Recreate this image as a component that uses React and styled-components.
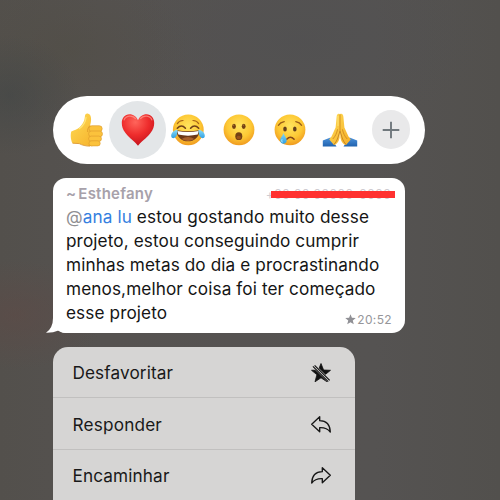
import React from "react";
import styled, { createGlobalStyle } from "styled-components";

const GlobalStyle = createGlobalStyle`
  * { box-sizing: border-box; }
  html, body { margin: 0; padding: 0; }
  body { overflow: hidden; font-family: Inter, "Liberation Sans", sans-serif; }
`;

const Screen = styled.main`
  width: 500px;
  height: 500px;
  padding: 96px 0 0 53px;
  overflow: hidden;
  display: flex;
  flex-direction: column;
  align-items: flex-start;
  background:
    radial-gradient(ellipse 90px 55px at 15px 315px, rgba(96, 73, 69, 0.5), transparent),
    radial-gradient(ellipse 70px 60px at 10px 95px, rgba(66, 70, 70, 0.6), transparent),
    radial-gradient(ellipse 120px 80px at 70px 50px, rgba(80, 76, 66, 0.45), transparent),
    radial-gradient(ellipse 190px 90px at 300px 40px, rgba(80, 80, 82, 0.6), transparent),
    linear-gradient(90deg, #53504c 0%, #555250 20%, #555352 75%, #52504d 100%);
`;

const ReactionBar = styled.div`
  flex: none;
  width: 372px;
  height: 67.5px;
  padding-left: 8.6px;
  border-radius: 34px;
  background: #fff;
  display: grid;
  grid-template-columns: repeat(7, 50.7px);
  align-items: center;
  justify-items: center;
`;

const Reaction = styled.div`
  width: ${(p) => p.$size}px;
  height: ${(p) => p.$size}px;
  margin: 0 -4px;
  border-radius: 50%;
  background: ${(p) => p.$fill || "transparent"};
  display: flex;
  align-items: center;
  justify-content: center;
`;

const Glyph = styled.svg`
  display: block;
  flex: none;
  width: ${(p) => p.$w || 36}px;
  height: ${(p) => p.$w || 36}px;
  overflow: visible;
`;

const Bubble = styled.article`
  position: relative;
  flex: none;
  width: 352px;
  height: 154.5px;
  margin-top: 14.5px;
  padding: 6px 10px 0 13px;
  border-radius: 13px;
  background: #fff;
`;

const Tail = styled.svg`
  position: absolute;
  left: -8px;
  bottom: 0;
  width: 24px;
  height: 20px;
`;

const Header = styled.header`
  height: 20px;
  display: flex;
  align-items: center;
  justify-content: space-between;
`;

const Author = styled.span`
  color: #a7a1aa;
  font-size: 15px;
  font-weight: 600;
  line-height: 20px;
  letter-spacing: 0.22px;
  white-space: pre;
`;

const Tilde = styled.span`
  margin-right: 2px;
`;

const Redacted = styled.span`
  position: relative;
  width: 124px;
  height: 20px;
  padding-right: 4px;
  color: #cfccd1;
  font-size: 12.5px;
  line-height: 22px;
  letter-spacing: 0.1px;
  direction: ltr;
  display: flex;
  justify-content: flex-end;
  white-space: nowrap;

  &::after {
    content: "";
    position: absolute;
    left: 0;
    top: 7px;
    width: 124px;
    height: 7px;
    background: #ff3130;
  }
`;

const Message = styled.div`
  position: relative;
  margin-top: 1px;
  color: #151515;
`;

const Line = styled.div`
  height: 24.1px;
  font-size: 17.2px;
  line-height: 24.1px;
  letter-spacing: ${(p) => p.$track ?? 0.1}px;
  white-space: nowrap;
`;

const At = styled.span`
  color: #8f8f93;
`;

const Mention = styled.span`
  color: #3480e0;
`;

const Stamp = styled.footer`
  position: absolute;
  right: 13px;
  bottom: 5px;
  display: flex;
  align-items: center;
  gap: 1px;
  color: #96969a;
  font-size: 12px;
  line-height: 16px;
  letter-spacing: 0.35px;
`;

const Menu = styled.nav`
  flex: none;
  width: 302px;
  height: 170px;
  margin-top: 14.5px;
  border-radius: 15px 15px 0 0;
  overflow: hidden;
  background: #d6d5d4;
`;

const MenuItem = styled.div`
  height: 51.4px;
  padding: 1px 24px 0 19.5px;
  border-bottom: 1px solid #c1c0bf;
  display: flex;
  align-items: center;
  justify-content: space-between;
  color: #191919;
  font-size: 17.2px;
  letter-spacing: ${(p) => p.$track ?? 0.1}px;
`;

const STAR = "M10 .5 12.6 7 19.5 7.3 14.1 11.7 16 18.8 10 14.8 4 18.8 5.9 11.7 .5 7.3 7.4 7Z";

const EmojiPaints = () => (
  <defs>
    <radialGradient id="face" cx="50%" cy="38%" r="65%">
      <stop offset="0" stopColor="#ffe45e" />
      <stop offset="0.6" stopColor="#fdc834" />
      <stop offset="1" stopColor="#ee951d" />
    </radialGradient>
    <linearGradient id="skin" x1="0" y1="0" x2="1" y2="1">
      <stop offset="0" stopColor="#ffdc55" />
      <stop offset="1" stopColor="#f5ae28" />
    </linearGradient>
    <radialGradient id="heart" cx="42%" cy="25%" r="75%">
      <stop offset="0" stopColor="#ff655b" />
      <stop offset="0.55" stopColor="#ee2c2c" />
      <stop offset="1" stopColor="#c5141d" />
    </radialGradient>
    <linearGradient id="tear" x1="0" y1="0" x2="0" y2="1">
      <stop offset="0" stopColor="#8bdcf8" />
      <stop offset="1" stopColor="#2fa0e4" />
    </linearGradient>
    <linearGradient id="sleeve" x1="0" y1="0" x2="0" y2="1">
      <stop offset="0" stopColor="#4c92dc" />
      <stop offset="1" stopColor="#2163af" />
    </linearGradient>
  </defs>
);

const ThumbsUp = () => (
  <Glyph viewBox="0 0 36 36">
    <EmojiPaints />
    <path d="M2.3 19.5C5.5 17.7 8 17.7 10.4 15.5C13.4 12.4 15.6 9.5 15.8 5.2C15.9 1.8 17.6 1.2 19.2 1.7C22.8 2.8 22.6 8.6 21 13.7L27.5 14.3C29.6 14.5 29.8 16 29.3 18L28 31.5C27 34 24 34.4 20 34.1C15 33.8 12.3 32.4 10.2 31.6L3.5 31.2C1.5 28 1.4 22 2.3 19.5Z" fill="url(#skin)" />
    <g fill="#fbc23c" stroke="#dc982c" strokeWidth="0.6">
      <rect x="20" y="13.7" width="13.2" height="6" rx="3" />
      <rect x="19.6" y="19" width="13.9" height="5.8" rx="2.9" />
      <rect x="19.6" y="24.1" width="12.9" height="5.3" rx="2.65" />
      <rect x="20" y="28.8" width="11.2" height="5.1" rx="2.5" />
    </g>
    <path d="M10.5 16.5C14 14 16.5 10 17 5.5" fill="none" stroke="#ffe577" strokeWidth="1.3" strokeLinecap="round" />
    <path d="M21 13.5C19 15.5 18.2 18 18.8 20" fill="none" stroke="#dc9426" strokeWidth="0.8" />
    <path d="M3.6 31.2 10.2 31.6C13 33.2 17 34.2 21 34.1" fill="none" stroke="#d88e22" strokeWidth="0.8" />
  </Glyph>
);

const Heart = () => (
  <Glyph viewBox="0 0 36 36">
    <path d="M18 33.7C15.6 30 9.5 26.2 5.5 20.9C2.8 17.4 1.8 14.2 1.8 10.9C1.8 5.9 5 2.3 9.4 2.3C13.4 2.3 16.6 4.7 18 8.3C19.4 4.7 22.6 2.3 26.6 2.3C31 2.3 34.2 5.9 34.2 10.9C34.2 14.2 33.2 17.4 30.5 20.9C26.5 26.2 20.4 30 18 33.7Z" fill="url(#heart)" />
    <path d="M4 8.3C5.3 3.5 12.5 2.4 15.8 7M20.2 7C23.5 2.4 30.7 3.5 32 8.3" fill="none" stroke="#ff9a8f" strokeWidth="1.2" opacity="0.7" />
  </Glyph>
);

const Tears = () => (
  <Glyph viewBox="0 0 36 36">
    <circle cx="18.3" cy="17.8" r="15.4" fill="url(#face)" />
    <path d="M7.3 11.7Q9 8.7 13 8.5M28.7 11.7Q27 8.7 23 8.5" fill="none" stroke="#a56318" strokeWidth="1.2" strokeLinecap="round" />
    <path d="M7.3 16.2Q11.5 11.8 15.4 16.2M28.7 16.2Q24.5 11.8 20.6 16.2" fill="none" stroke="#704019" strokeWidth="1.6" strokeLinecap="round" />
    <path d="M6.6 18.2Q18 20.4 29.4 18.2C29.2 25.7 24 29.3 18 29.3S6.8 25.7 6.6 18.2Z" fill="#6c3818" />
    <path d="M7.4 19Q18 21.2 28.6 19L27.7 22.5Q18 24.8 8.3 22.5Z" fill="#fff" />
    <path d="M11.5 27Q18 22.8 24.5 27Q18 31 11.5 27Z" fill="#a8602c" />
    <path d="M7.6 17.8C3.5 18.2 1 21.4 1.2 24.2C1.5 26.5 4.2 26.7 5.7 25.1C7.3 23.3 7.4 20.7 7.6 17.8ZM28.4 17.8C32.5 18.2 35 21.4 34.8 24.2C34.5 26.5 31.8 26.7 30.3 25.1C28.7 23.3 28.6 20.7 28.4 17.8Z" fill="url(#tear)" />
  </Glyph>
);

const Surprised = () => (
  <Glyph viewBox="0 0 36 36">
    <circle cx="18" cy="17.8" r="15.4" fill="url(#face)" />
    <g fill="#734114">
      <ellipse cx="13" cy="14.3" rx="1.9" ry="2.6" />
      <ellipse cx="22.7" cy="14.3" rx="1.9" ry="2.6" />
      <ellipse cx="17.8" cy="24.2" rx="3.5" ry="3.9" />
    </g>
    <ellipse cx="17.8" cy="25.5" rx="2.2" ry="1.8" fill="#98531a" />
    <g fill="#b37b37">
      <circle cx="12.6" cy="13.2" r="0.6" />
      <circle cx="22.3" cy="13.2" r="0.6" />
    </g>
  </Glyph>
);

const Crying = () => (
  <Glyph viewBox="0 0 36 36">
    <circle cx="18" cy="17.8" r="15.4" fill="url(#face)" />
    <path d="M6.4 13.3Q8.2 10.4 12.2 9.7M29.6 13.3Q27.8 10.4 23.8 9.7" fill="none" stroke="#985d19" strokeWidth="1.3" strokeLinecap="round" />
    <ellipse cx="13" cy="17" rx="1.8" ry="2.6" fill="#65401c" />
    <ellipse cx="22.8" cy="17" rx="1.8" ry="2.6" fill="#65401c" />
    <path d="M14.7 27.3Q18.4 23 22.1 27.3" fill="none" stroke="#844718" strokeWidth="1.5" strokeLinecap="round" />
    <path d="M11.8 20.2C11.2 23 15 25.5 14.7 28.8C14.3 32.6 8.7 32.6 8.2 28.8C7.9 26 11.1 23.5 11.8 20.2Z" fill="url(#tear)" />
    <path d="M10 27.3Q9.3 29 10.3 30.3" fill="none" stroke="#b7edff" strokeWidth="1" />
  </Glyph>
);

const Prayer = () => (
  <Glyph viewBox="0 0 36 36">
    <path d="M.8 28.4 8.5 25.4 14.5 34.4H.8ZM35.2 28.4 27.5 25.4 21.5 34.4H35.2Z" fill="url(#sleeve)" />
    <path d="M17.8 2.2C15.9 1 14.7 2.7 14.6 5L13.6 15.5 9.5 24.4 7.2 27.6 12 33.1C16 31.5 17.2 28 17.6 25.4L18 18 18.4 25.4C18.8 28 20 31.5 24 33.1L28.8 27.6 26.5 24.4 22.4 15.5 21.4 5C21.3 2.7 20.1 1 17.8 2.2Z" fill="url(#skin)" />
    <path d="M18 2.5V19M15.6 17.3C14.7 21.3 13.5 24 10.8 27M20.4 17.3C21.3 21.3 22.5 24 25.2 27" fill="none" stroke="#d18a1e" strokeWidth="0.9" />
    <path d="M18 19 16.1 25C15.2 28 13.8 30.5 11.9 32.5M18 19 19.9 25C20.8 28 22.2 30.5 24.1 32.5" fill="none" stroke="#bd781d" strokeWidth="0.8" />
    <path d="M16 4V14" stroke="#ffe982" strokeWidth="0.8" />
  </Glyph>
);

const Plus = () => (
  <Glyph viewBox="0 0 20 20" $w={20}>
    <path d="M10 1.7V18.3M1.7 10H18.3" fill="none" stroke="#70787d" strokeWidth="1.9" />
  </Glyph>
);

const StarOff = () => (
  <Glyph viewBox="0 0 20 20" $w={20}>
    <path d={STAR} fill="#111" stroke="#111" strokeWidth="0.8" strokeLinejoin="round" />
    <path d="M1.8 1.9 18.9 18.6" stroke="#d6d5d4" strokeWidth="3.6" />
    <path d="M3.6 2.3 18.7 17.4M1.9 3.4 17.2 18.7" stroke="#111" strokeWidth="1.15" />
  </Glyph>
);

const Arrow = ({ forward }) => (
  <Glyph viewBox="0 0 20 20" $w={20}>
    <path
      transform={forward ? "translate(20 0.6) scale(-1 1)" : "translate(0 0.6)"}
      d="M8.7 2.1V6.1C15.2 6.2 19 9.7 19.3 17.4C16.6 13.7 13.4 12.8 8.7 13V17.2L.7 9.7Z"
      fill="none"
      stroke="#161616"
      strokeWidth="1.35"
      strokeLinejoin="round"
    />
  </Glyph>
);

export default function App() {
  return (
    <>
      <GlobalStyle />
      <Screen>
        <ReactionBar>
          <Reaction $size={36}><ThumbsUp /></Reaction>
          <Reaction $size={57.6} $fill="#e3e6e8"><Heart /></Reaction>
          <Reaction $size={36}><Tears /></Reaction>
          <Reaction $size={36}><Surprised /></Reaction>
          <Reaction $size={36}><Crying /></Reaction>
          <Reaction $size={36}><Prayer /></Reaction>
          <Reaction $size={38.6} $fill="#e9e9ea"><Plus /></Reaction>
        </ReactionBar>

        <Bubble>
          <Tail viewBox="0 0 24 20">
            <path d="M8 0V5Q8 15 1 19.8Q8 20 13.5 17.4Q17 20 21 20H24V0Z" fill="#fff" />
          </Tail>
          <Header>
            <Author><Tilde>~</Tilde>Esthefany</Author>
            <Redacted>+00 00 00000-0000</Redacted>
          </Header>
          <Message>
            <Line><At>@</At><Mention>ana lu</Mention> estou gostando muito desse</Line>
            <Line>projeto, estou conseguindo cumprir</Line>
            <Line>minhas metas do dia e procrastinando</Line>
            <Line>menos,melhor coisa foi ter começado</Line>
            <Line>esse projeto</Line>
          </Message>
          <Stamp>
            <Glyph viewBox="0 0 20 20" $w={11}><path d={STAR} fill="#909095" /></Glyph>
            20:52
          </Stamp>
        </Bubble>

        <Menu>
          <MenuItem>Desfavoritar<StarOff /></MenuItem>
          <MenuItem $track={0.18}>Responder<Arrow /></MenuItem>
          <MenuItem $track={0.12}>Encaminhar<Arrow forward /></MenuItem>
        </Menu>
      </Screen>
    </>
  );
}
